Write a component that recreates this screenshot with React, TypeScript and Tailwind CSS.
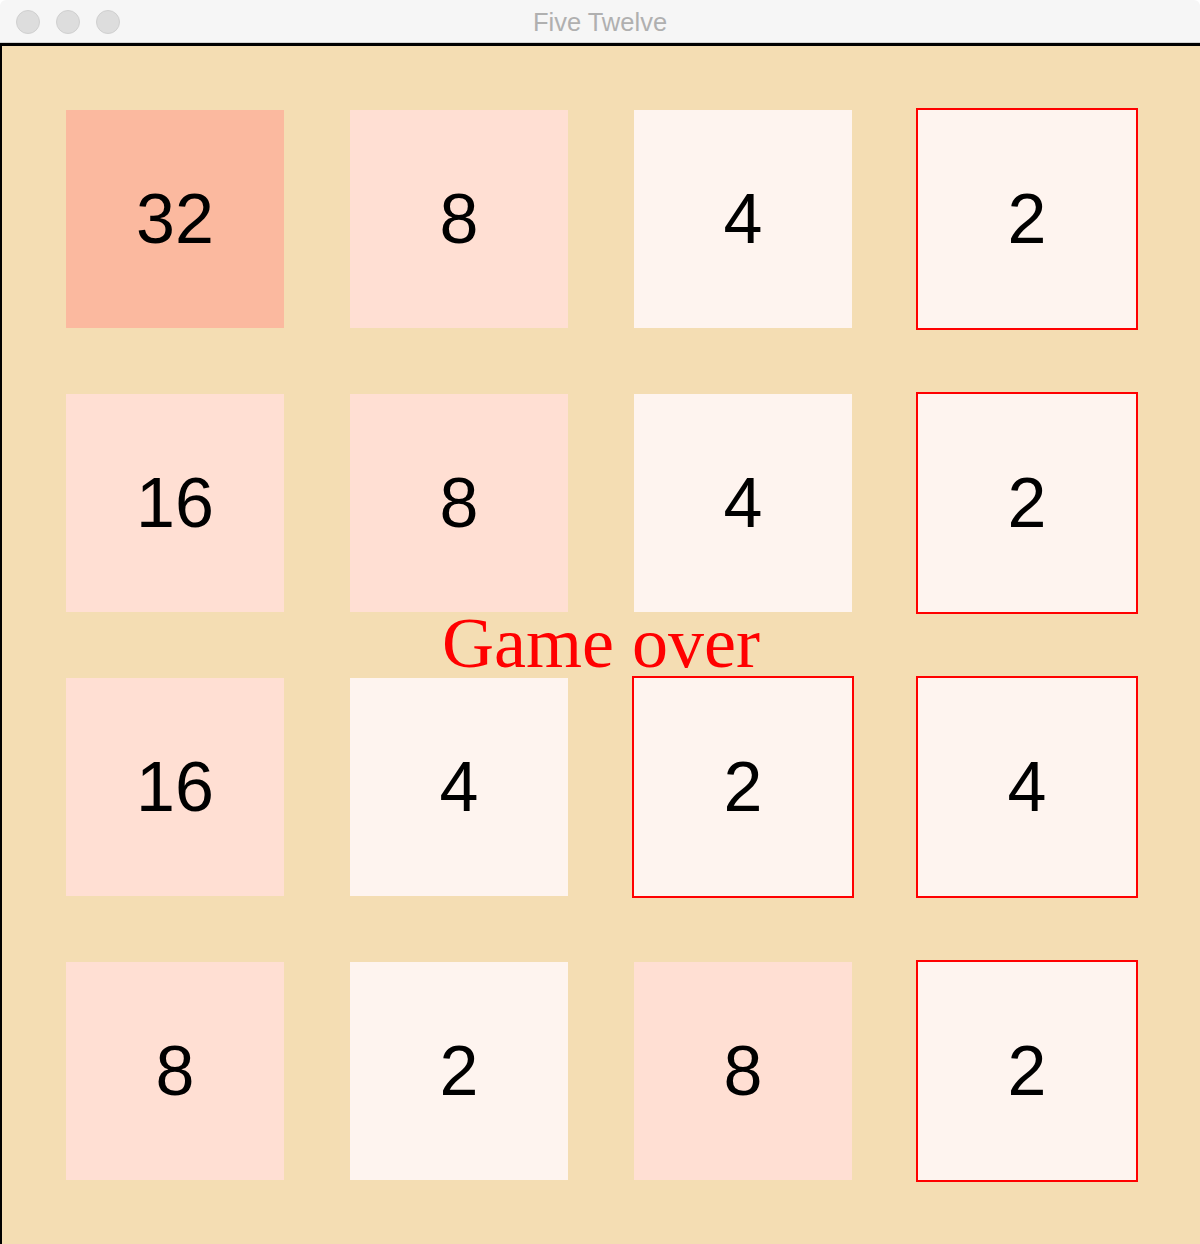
type Tile = { value: number; flagged?: boolean }

const board: Tile[][] = [
  [{ value: 32 }, { value: 8 }, { value: 4 }, { value: 2, flagged: true }],
  [{ value: 16 }, { value: 8 }, { value: 4 }, { value: 2, flagged: true }],
  [{ value: 16 }, { value: 4 }, { value: 2, flagged: true }, { value: 4, flagged: true }],
  [{ value: 8 }, { value: 2 }, { value: 8 }, { value: 2, flagged: true }],
]

const tileColor = (value: number) => {
  if (value >= 32) return "bg-[#fbb99f]"
  if (value >= 8) return "bg-[#ffdfd3]"
  return "bg-[#fef4ef]"
}

function TitleBar() {
  return (
    <div className="relative flex h-[43px] items-center justify-center rounded-t-[6px] border-b border-[#d2d2d2] bg-[#f6f6f6] pt-[3px]">
      <div className="absolute left-[16px] top-[10px] flex gap-[16px]">
        <span className="h-[24px] w-[24px] rounded-full border border-[#d0d0d0] bg-[#dddddd]" />
        <span className="h-[24px] w-[24px] rounded-full border border-[#d0d0d0] bg-[#dddddd]" />
        <span className="h-[24px] w-[24px] rounded-full border border-[#d0d0d0] bg-[#dddddd]" />
      </div>
      <span className="text-[25.5px] leading-none text-[#b0b0b0] [font-family:'Liberation_Sans',Arial,sans-serif]">
        Five Twelve
      </span>
    </div>
  )
}

export default function App() {
  return (
    <div className="flex h-[1244px] w-[1200px] flex-col bg-white">
      <TitleBar />
      <div className="relative flex-1 border-l-2 border-t-[3px] border-black bg-[#f4ddb3] pl-[64px] pr-[64px] pt-[64px]">
        <div className="grid grid-cols-4 gap-[66px]">
          {board.flat().map((tile, i) => (
            <div
              key={i}
              className={`flex h-[218px] w-[218px] items-center justify-center ${tileColor(tile.value)} ${
                tile.flagged ? "shadow-[0_0_0_2px_#ff0000]" : ""
              }`}
            >
              <span className="text-[70px] leading-none text-black [font-family:'Liberation_Sans',Arial,sans-serif]">
                {tile.value}
              </span>
            </div>
          ))}
        </div>
        <div className="absolute left-0 right-0 top-[561px] text-center text-[72px] leading-none text-[#ff0000] [font-family:'Liberation_Serif','Times_New_Roman',serif]">
          Game over
        </div>
      </div>
    </div>
  )
}
